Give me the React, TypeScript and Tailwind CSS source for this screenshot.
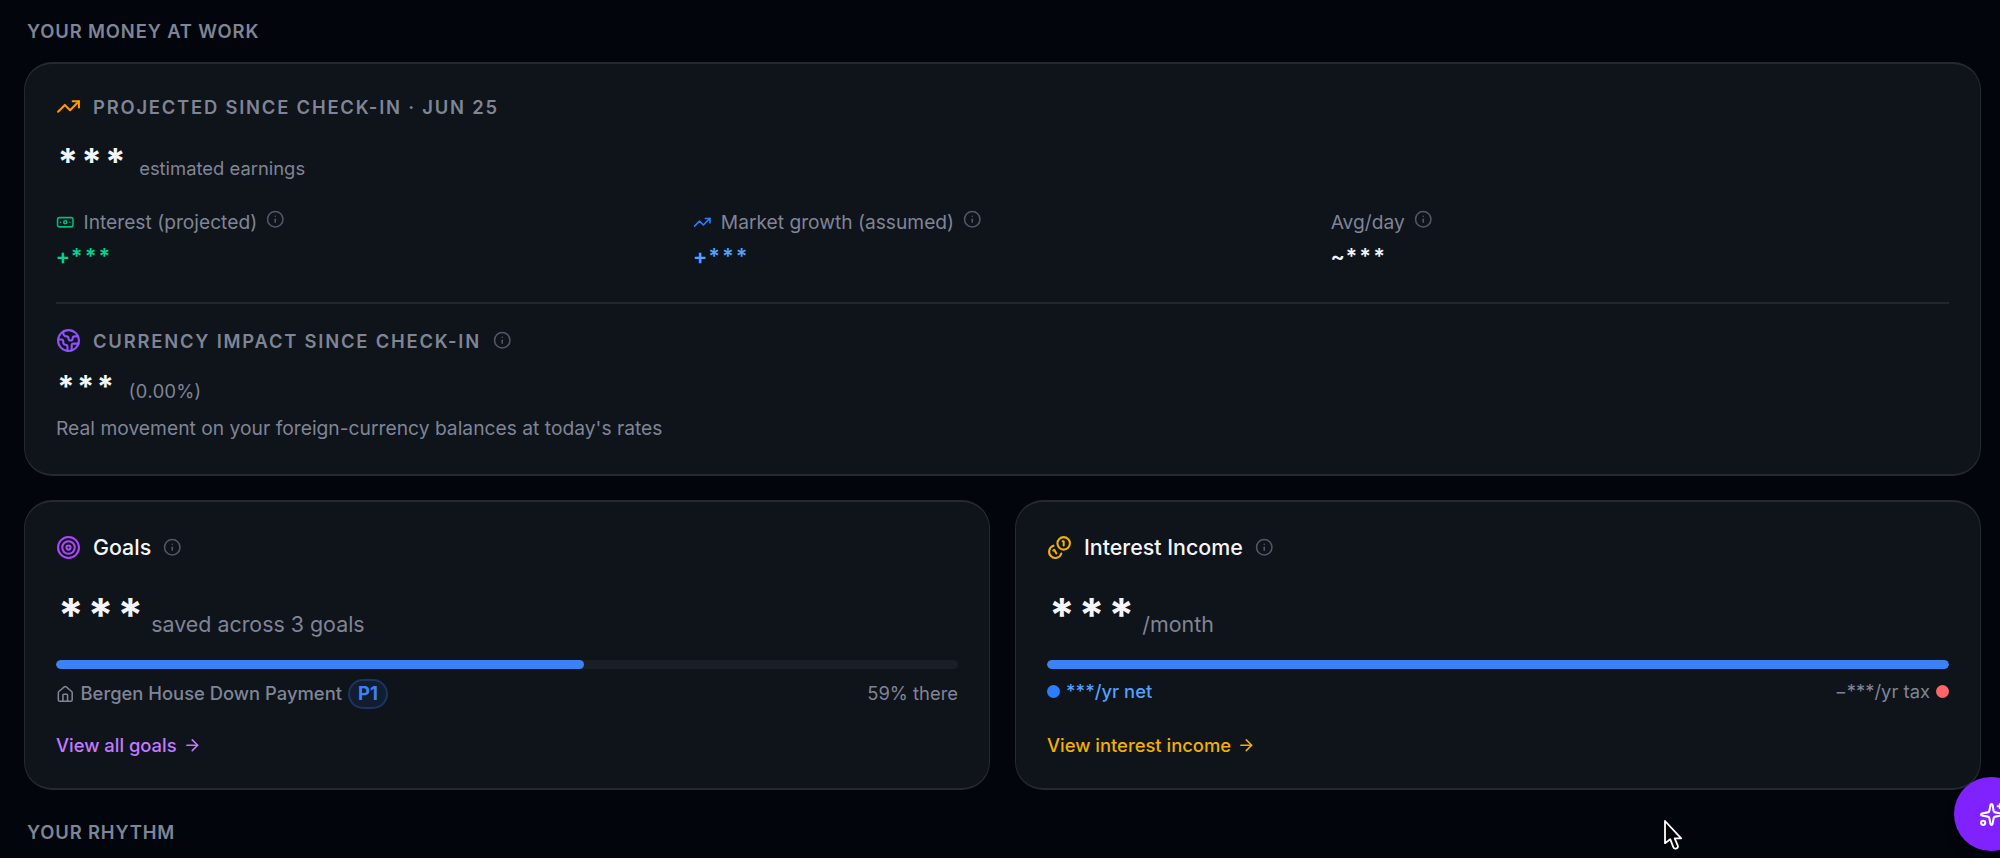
import type { ReactNode } from "react";
import {
  ArrowRight,
  Banknote,
  Earth,
  House,
  Info,
  Sparkles,
  Target,
  TrendingUp,
} from "lucide-react";

function InfoIcon({ className = "" }: { className?: string }) {
  return <Info className={`size-[18.5px] shrink-0 text-[#535866] ${className}`} />;
}

function CoinsIcon() {
  return (
    <svg
      viewBox="0 0 24 24"
      fill="none"
      stroke="currentColor"
      strokeWidth="2"
      strokeLinecap="round"
      strokeLinejoin="round"
      className="size-[25px] text-[#f0b100]"
    >
      <path d="M13.744 17.736a6 6 0 1 1-7.48-7.48" />
      <path d="M15 6h1v4" />
      <path d="m6.134 14.768.866-.5 2 3.464" />
      <circle cx="16" cy="8" r="6" />
    </svg>
  );
}

function SectionTitle({ children }: { children: ReactNode }) {
  return (
    <h2 className="pl-[3px] text-[18.4px] leading-[25px] font-semibold tracking-[0.047em] text-[#7f8596] uppercase">
      {children}
    </h2>
  );
}

function Card({ children, className = "" }: { children: ReactNode; className?: string }) {
  return (
    <section
      className={`rounded-[28px] border-x border-y-2 border-[#262930] bg-[#0f131a] px-[31px] ${className}`}
    >
      {children}
    </section>
  );
}

const stats = [
  {
    label: "Interest (projected)",
    value: "+***",
    color: "text-[#00d492]",
    icon: <Banknote className="size-[18.5px] text-[#00bc7d]" />,
  },
  {
    label: "Market growth (assumed)",
    value: "+***",
    color: "text-[#51a2ff]",
    icon: <TrendingUp className="size-[18.5px] text-[#2b7fff]" />,
  },
  { label: "Avg/day", value: "~***", color: "text-[#f4f5f9]", icon: null },
];

function ProjectedCard() {
  return (
    <Card className="mt-[18px] h-[414px] pt-[30px]">
      <div className="flex h-[25px] items-center gap-3">
        <TrendingUp className="size-[25px] text-[#fe9a00]" />
        <h3 className="text-[18.4px] leading-[24px] font-semibold tracking-[0.0975em] text-[#7f8596] uppercase">
          Projected since check-in · Jun 25
        </h3>
      </div>
      <div className="mt-[18px] flex h-[50px] items-baseline gap-[12px]">
        <span className="text-[36.7px] leading-[50px] font-bold text-[#f4f5f9] tabular-nums">***</span>
        <span className="text-[18.4px] text-[#7f8596]">estimated earnings</span>
      </div>
      <div className="mt-[23px] grid grid-cols-3 gap-[19px]">
        {stats.map((stat) => (
          <div key={stat.label}>
            <div className="flex h-[25px] items-center text-[19.2px] text-[#7f8596]">
              {stat.icon && <span className="mr-[9px]">{stat.icon}</span>}
              {stat.label}
              <InfoIcon className="mb-[6px] ml-[9px]" />
            </div>
            <p className={`mt-[6px] text-[21.4px] leading-[31px] font-semibold tabular-nums ${stat.color}`}>
              {stat.value}
            </p>
          </div>
        ))}
      </div>

      <div className="mt-[30px] border-t-2 border-[#23262d] pt-[24px]">
        <div className="flex h-[25px] items-center gap-3">
          <Earth className="size-[25px] text-[#8e51ff]" />
          <h3 className="text-[18.4px] leading-[24px] font-semibold tracking-[0.0975em] text-[#7f8596] uppercase">
            Currency impact since check-in
          </h3>
          <InfoIcon />
        </div>
        <div className="mt-[12px] flex h-[44px] items-baseline gap-[13px]">
          <span className="text-[30.6px] leading-[44px] font-bold text-[#f4f5f9] tabular-nums">***</span>
          <span className="text-[18.4px] text-[#7f8596] tabular-nums">(0.00%)</span>
        </div>
        <p className="mt-[7px] text-[19.25px] leading-[25px] text-[#7f8596]">
          Real movement on your foreign-currency balances at today's rates
        </p>
      </div>
    </Card>
  );
}

function CardHeader({ icon, title }: { icon: ReactNode; title: string }) {
  return (
    <div className="flex h-[31px] items-center gap-3">
      {icon}
      <h3 className="text-[21.4px] font-medium text-[#f4f5f9]">{title}</h3>
      <InfoIcon />
    </div>
  );
}

function Amount({ caption }: { caption: string }) {
  return (
    <div className="mt-[24px] flex h-[57px] items-baseline gap-[6px]">
      <span className="text-[46px] leading-[57px] font-bold text-[#f4f5f9] tabular-nums">***</span>
      <span className="text-[21.4px] text-[#7f8596]">{caption}</span>
    </div>
  );
}

function ProgressBar({ value }: { value: number }) {
  return (
    <div className="mt-[16px] h-[9px] overflow-hidden rounded-full bg-[#1a1e27]">
      <div className="h-full rounded-full bg-[#3b82f6]" style={{ width: `${value}%` }} />
    </div>
  );
}

function CardLink({ className, children }: { className: string; children: ReactNode }) {
  return (
    <a
      href="#"
      className={`flex h-[25px] items-center gap-[6px] text-[18.4px] font-medium ${className}`}
    >
      {children}
      <ArrowRight className="size-[18.5px]" />
    </a>
  );
}

function GoalsCard() {
  return (
    <Card className="h-[290px] pt-[30px]">
      <CardHeader icon={<Target className="size-[25px] text-[#ad46ff]" />} title="Goals" />
      <Amount caption="saved across 3 goals" />
      <ProgressBar value={58.5} />
      <div className="mt-[10px] flex h-[30px] items-center text-[18.4px] text-[#7f8596]">
        <House className="mr-[6px] size-[18.5px]" />
        <span className="font-medium">Bergen House Down Payment</span>
        <span className="ml-[6px] flex h-[30px] items-center rounded-full border-2 border-[#1b3561] bg-[#131d30] px-[8px] font-bold text-[#3b82f6]">
          P1
        </span>
        <span className="ml-auto">59% there</span>
      </div>
      <CardLink className="mt-[24px] text-[#c27aff]">View all goals</CardLink>
    </Card>
  );
}

function InterestCard() {
  return (
    <Card className="h-[290px] pt-[30px]">
      <CardHeader icon={<CoinsIcon />} title="Interest Income" />
      <Amount caption="/month" />
      <ProgressBar value={100} />
      <div className="mt-[10px] flex h-[25px] items-center justify-between text-[18.4px]">
        <span className="flex items-center gap-[6px] font-medium text-[#51a2ff]">
          <span className="size-[13px] rounded-full bg-[#2b7fff]" />
          ***/yr net
        </span>
        <span className="flex items-center gap-[6px] text-[#7f8596]">
          −***/yr tax
          <span className="size-[13px] rounded-full bg-[#ff6467]" />
        </span>
      </div>
      <CardLink className="mt-[29px] text-[#f0b100]">View interest income</CardLink>
    </Card>
  );
}

export default function App() {
  return (
    <div className="relative h-[858px] w-[2000px] overflow-hidden bg-[#03050c] pt-[19px] pr-[19px] pl-[24px] font-['Inter',sans-serif]">
      <SectionTitle>Your money at work</SectionTitle>
      <ProjectedCard />
      <div className="mt-[24px] mb-[30px] grid grid-cols-2 gap-[25px]">
        <GoalsCard />
        <InterestCard />
      </div>
      <SectionTitle>Your rhythm</SectionTitle>

      {/* Assistant button */}
      <button
        aria-label="Assistant"
        className="absolute top-[777px] left-[1954px] flex size-[74px] items-center justify-center rounded-full bg-[#7f22fe] text-white shadow-lg"
      >
        <Sparkles className="size-[25px]" />
      </button>

      {/* Pointer */}
      <svg viewBox="0 0 20 32" className="absolute top-[819px] left-[1663px] h-[32px] w-[20px]">
        <path
          d="M2 2V24.2L7.2 20.2L10.3 28.2Q11.2 30.3 13.5 29.4Q15.6 28.5 14.7 26.3L11.7 19.3H18.2Z"
          fill="#000"
          stroke="#fff"
          strokeWidth="1.8"
          strokeLinejoin="round"
        />
      </svg>
    </div>
  );
}
